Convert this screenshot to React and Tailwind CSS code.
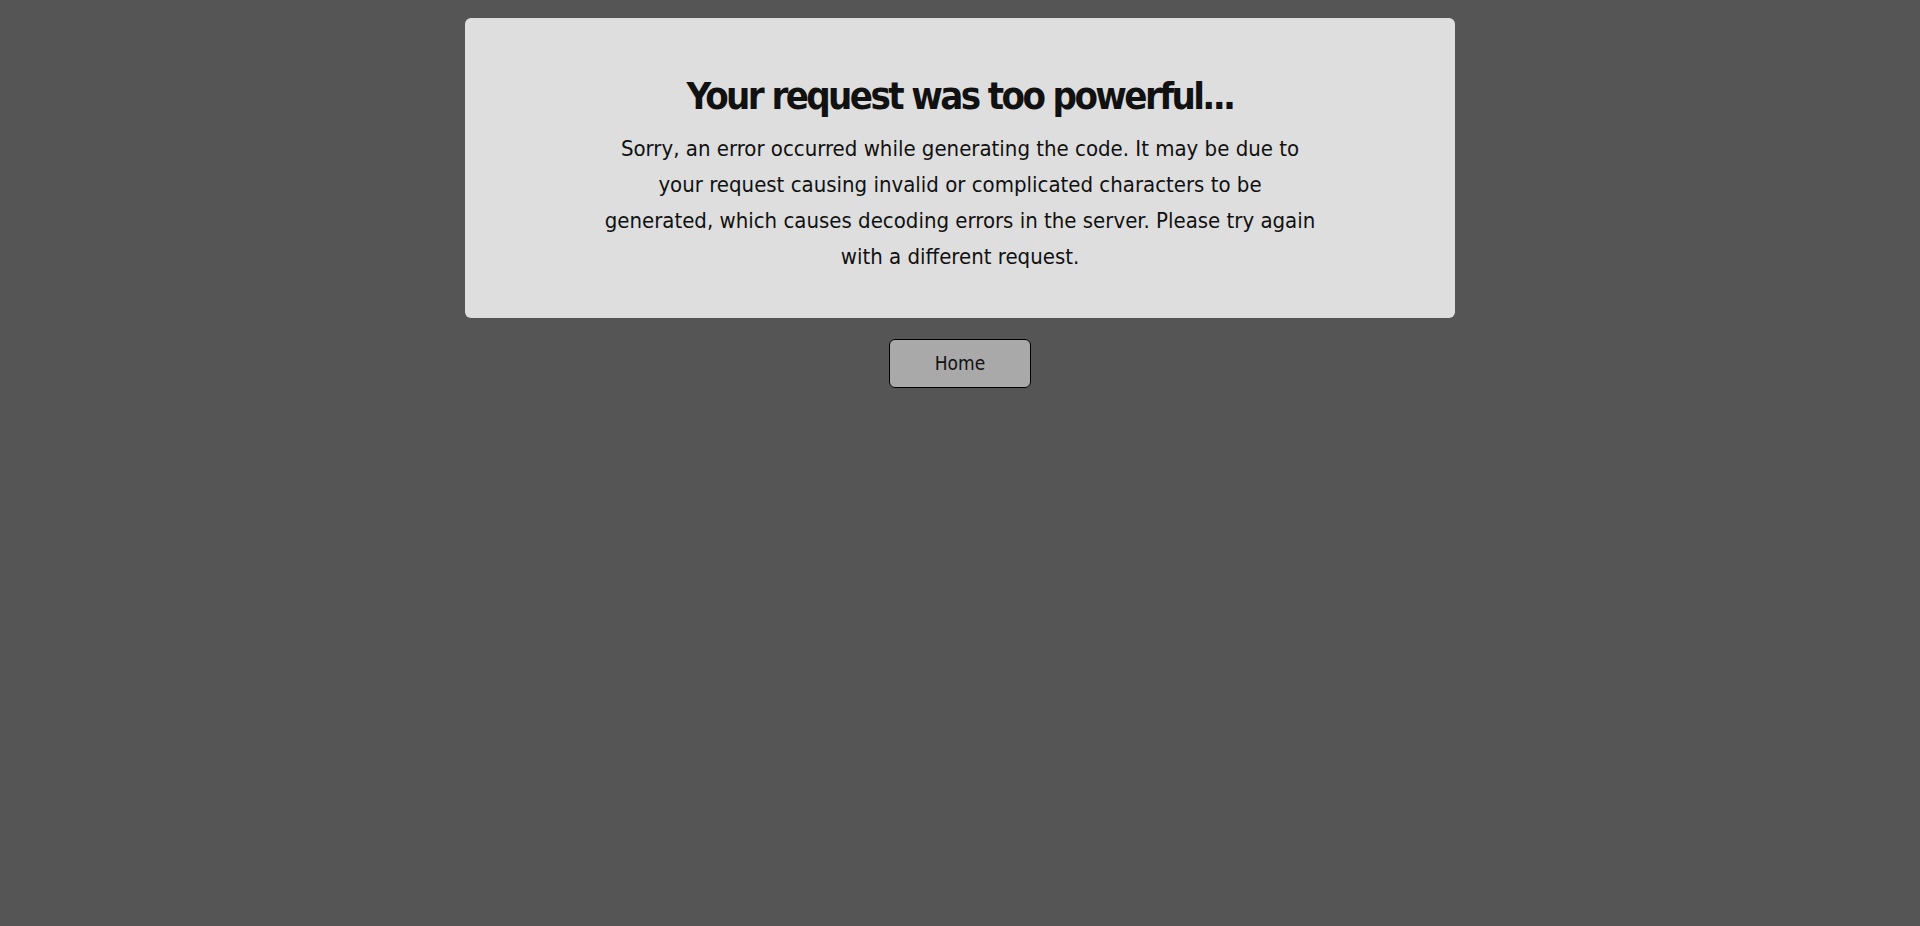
import React from 'react';

const font = { fontFamily: '"Liberation Sans Narrow", "DejaVu Sans Condensed", Roboto, sans-serif' };

const ErrorPage = () => {
  return (
    <div className="min-h-screen w-full bg-[#555555] pt-[18px]" style={font}>
      {/* Error card */}
      <div className="mx-auto w-[990px] h-[300px] rounded-md bg-[#dedede] pt-[49px] text-center text-[#111]">
        <h1 className="text-[38px] leading-[58px] font-bold tracking-[-2.6px]">Your request was too powerful...</h1>
        <p className="mt-[6px] text-[22px] leading-[36px]">
          Sorry, an error occurred while generating the code. It may be due to
          <br />
          your request causing invalid or complicated characters to be
          <br />
          generated, which causes decoding errors in the server. Please try again
          <br />
          with a different request.
        </p>
      </div>

      {/* Home button */}
      <div className="flex justify-center mt-[21px]">
        <button className="w-[142px] h-[49px] rounded-md border border-black bg-[#a9a9a9] text-[19px] text-[#111]">
          Home
        </button>
      </div>
    </div>
  );
};

export default function App() {
  return <ErrorPage />;
}
